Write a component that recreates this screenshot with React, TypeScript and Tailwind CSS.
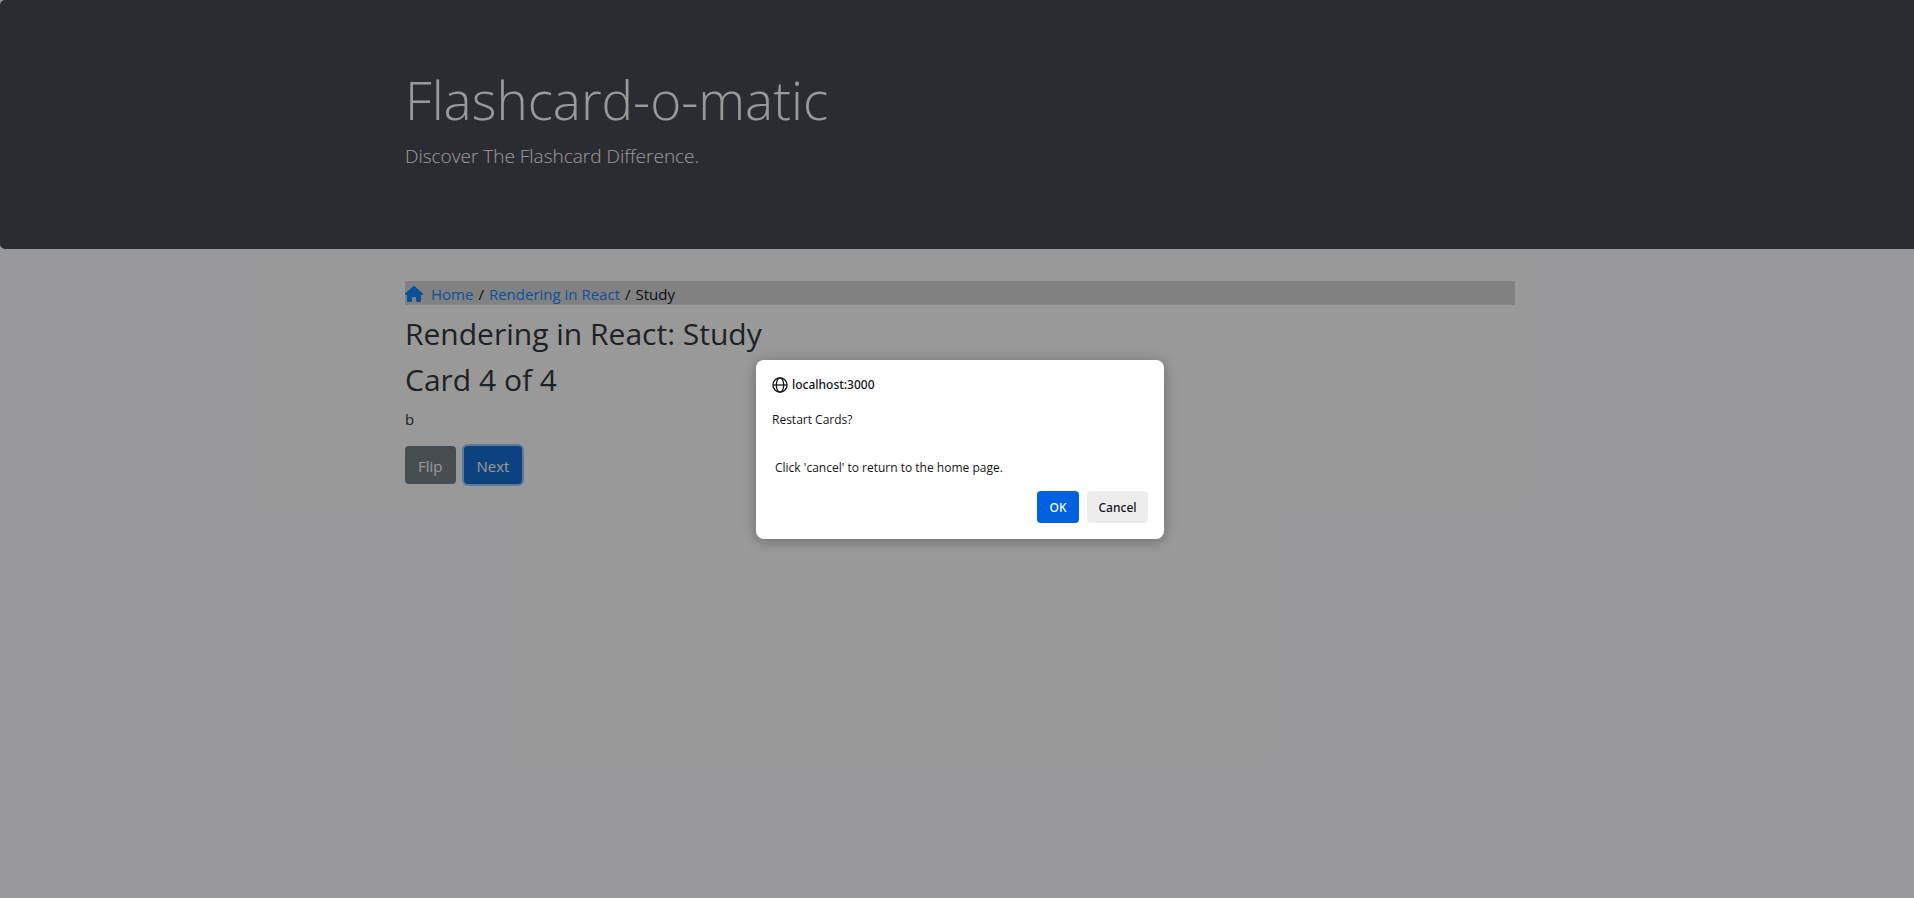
import { FaHouse } from "react-icons/fa6";

function GlobeIcon() {
  return (
    <svg className="size-4 shrink-0" viewBox="0 0 16 16" fill="none" stroke="#15141a" strokeWidth="1.25" aria-hidden="true">
      <circle cx="8" cy="8" r="7.1" />
      <ellipse cx="8" cy="8" rx="3.7" ry="7.1" />
      <path d="M1 8h14" />
    </svg>
  );
}

function Header() {
  return (
    <header className="mb-8 rounded-[5px] bg-[#373a40] px-8 pt-[66px] pb-[62px] text-white">
      <div className="mx-auto max-w-[1140px] px-[15px]">
        <h1 className="mb-2 text-[53px] leading-[67px] font-light">Flashcard-o-matic</h1>
        <p className="mb-4 text-[19px] leading-[30px] font-light">Discover The Flashcard Difference.</p>
      </div>
    </header>
  );
}

function Study() {
  return (
    <main className="mx-auto max-w-[1140px] px-[15px] text-[15px] leading-6 text-[#212529]">
      <nav aria-label="Breadcrumb" className="mb-[10px] flex h-6 items-center gap-[5px] bg-[#d3d3d3] pt-[2px] text-black">
        <a href="#home" className="flex items-center gap-2 text-[#007bff]">
          <FaHouse className="h-4 w-[18px]" aria-hidden="true" />
          Home
        </a>
        <span>/</span>
        <a href="#deck" className="text-[#007bff]">Rendering in React</a>
        <span>/</span>
        <span>Study</span>
      </nav>
      <h2 className="mb-2 text-[30px] leading-[38px]">Rendering in React: Study</h2>
      <h2 className="mb-2 text-[30px] leading-[38px]">Card 4 of 4</h2>
      <p className="mb-[15px]">b</p>
      <div className="flex gap-2">
        <button type="button" className="rounded bg-[#6c757d] px-[13px] pt-2 pb-[6px] text-white">Flip</button>
        <button type="button" className="rounded bg-[#0062cc] px-[13px] pt-2 pb-[6px] text-white ring-2 ring-[#268fff]/50">Next</button>
      </div>
    </main>
  );
}

function ConfirmDialog() {
  return (
    <div className="absolute inset-0 flex items-start justify-center bg-[#1c1c20]/45 pt-[360px]">
      <div
        role="dialog"
        aria-modal="true"
        aria-labelledby="dialog-origin"
        className="w-[408px] rounded-lg bg-white px-4 pt-[17px] pb-4 text-[12px] leading-4 text-[#15141a] shadow-[0_2px_14px_rgba(0,0,0,0.3)]"
      >
        <div className="mb-[19px] flex items-center gap-1 font-['Noto_Sans','Open_Sans',sans-serif] font-medium">
          <GlobeIcon />
          <span id="dialog-origin">localhost:3000</span>
        </div>
        <p className="mb-8">Restart Cards?</p>
        <p className="mb-[15px] pl-[3px]">Click 'cancel' to return to the home page.</p>
        <div className="flex justify-end gap-2 font-['Noto_Sans','Open_Sans',sans-serif] font-medium">
          <button type="button" className="h-8 w-[42px] rounded bg-[#0060df] pt-[2px] text-white">OK</button>
          <button type="button" className="h-8 w-[61px] rounded bg-[#ededee] pt-[2px]">Cancel</button>
        </div>
      </div>
    </div>
  );
}

export default function App() {
  return (
    <div className="min-h-screen overflow-hidden bg-white font-['Open_Sans','Noto_Sans',sans-serif]">
      <div className="relative min-h-screen w-[calc(100%+6px)]">
        <Header />
        <Study />
        <ConfirmDialog />
      </div>
    </div>
  );
}
